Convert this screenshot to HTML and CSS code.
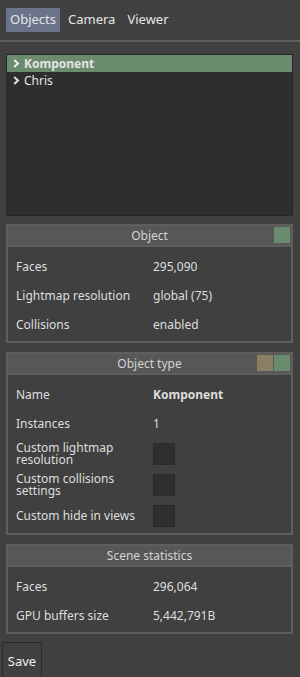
FILE: index.html
```html
<!DOCTYPE html>
<html>
<head>
<meta charset="utf-8">
<link rel="stylesheet" href="styles.css">
</head>
<body>
<div class="tabs">
  <div class="tab active">Objects</div>
  <div class="tab">Camera</div>
  <div class="tab">Viewer</div>
</div>
<div class="sep"></div>
<div class="tree">
  <div class="node selected"><span class="chev"><svg width="7" height="9" viewBox="0 0 7 9"><path d="M1.2 1 L5 4.5 L1.2 8" fill="none" stroke="#f0f0f0" stroke-width="2"/></svg></span><span class="bold">Komponent</span></div>
  <div class="node"><span class="chev"><svg width="7" height="9" viewBox="0 0 7 9"><path d="M1.2 1 L5 4.5 L1.2 8" fill="none" stroke="#e0e0e0" stroke-width="2"/></svg></span>Chris</div>
</div>

<div class="panel">
  <div class="phead">Object<div class="swatches"><span class="sw green"></span></div></div>
  <div class="pbody">
    <div class="row"><div class="lbl">Faces</div><div class="val">295,090</div></div>
    <div class="row"><div class="lbl">Lightmap resolution</div><div class="val">global (75)</div></div>
    <div class="row"><div class="lbl">Collisions</div><div class="val">enabled</div></div>
  </div>
</div>

<div class="panel">
  <div class="phead">Object type<div class="swatches"><span class="sw tan"></span><span class="sw green"></span></div></div>
  <div class="pbody">
    <div class="row"><div class="lbl">Name</div><div class="val bold">Komponent</div></div>
    <div class="row"><div class="lbl">Instances</div><div class="val">1</div></div>
    <div class="row crow"><div class="lbl">Custom lightmap resolution</div><div class="val"><span class="check"></span></div></div>
    <div class="row crow"><div class="lbl">Custom collisions settings</div><div class="val"><span class="check"></span></div></div>
    <div class="row crow"><div class="lbl">Custom hide in views</div><div class="val"><span class="check"></span></div></div>
  </div>
</div>

<div class="panel">
  <div class="phead">Scene statistics</div>
  <div class="pbody">
    <div class="row"><div class="lbl">Faces</div><div class="val">296,064</div></div>
    <div class="row"><div class="lbl">GPU buffers size</div><div class="val">5,442,791B</div></div>
  </div>
</div>

<div class="save">Save</div>
</body>
</html>
```
FILE: styles.css
```css
html, body {
  margin: 0;
  padding: 0;
  background: #404040;
  height: 100%;
  overflow: hidden;
}
body {
  font-family: "Noto Sans", "Open Sans", sans-serif;
  font-size: 12px;
  color: #dedede;
  display: flex;
  flex-direction: column;
}
body > * {
  flex-shrink: 0;
}
.tabs {
  display: flex;
  padding: 8px 6px 0 6px;
  gap: 4px;
}
.tab {
  height: 24px;
  line-height: 23px;
  padding: 0 4px;
  font-size: 13px;
  color: #e6e6e6;
}
.tab.active {
  background: #6a7388;
}
.sep {
  height: 2px;
  background: #5e5e5e;
  margin-top: 8px;
}
.tree {
  margin: 12px 7px 0 6px;
  height: 160px;
  background: #2e2e2e;
  border: 1px solid #262626;
}
.node {
  height: 17px;
  line-height: 16px;
  display: flex;
  align-items: center;
  color: #e4e4e4;
}
.node.selected {
  background: #6b8b6f;
}
.chev {
  width: 17px;
  display: flex;
  justify-content: center;
  padding-left: 1px;
  box-sizing: border-box;
}
.bold {
  font-weight: bold;
}
.panel {
  margin: 8px 7px 0 6px;
  border: 2px solid #5e5e5e;
}
.panel + .panel {
  margin-top: 9px;
}
.phead {
  position: relative;
  height: 19px;
  line-height: 19px;
  background: #575757;
  border-bottom: 2px solid #5e5e5e;
  text-align: center;
  color: #d4d4d4;
}
.swatches {
  position: absolute;
  right: 1px;
  top: 1px;
  display: flex;
  gap: 1px;
}
.sw {
  width: 16px;
  height: 16px;
}
.sw.green { background: #6b8b6f; }
.sw.tan { background: #8a7e65; }
.pbody {
  padding: 5px 0 2px 8px;
}
.row {
  display: grid;
  grid-template-columns: 137px 1fr;
  height: 29px;
  align-items: center;
}
.row.crow {
  height: 31px;
}
.lbl {
  padding-right: 6px;
  line-height: 12px;
}
.check {
  display: block;
  width: 20px;
  height: 20px;
  background: #2f2f2f;
  border: 1px solid #2a2a2a;
}
.save {
  margin: 8px 0 0 2px;
  width: 38px;
  height: 40px;
  line-height: 36px;
  border: 1px solid #2a2a2a;
  text-align: center;
  font-size: 13px;
  color: #f0f0f0;
}
```
